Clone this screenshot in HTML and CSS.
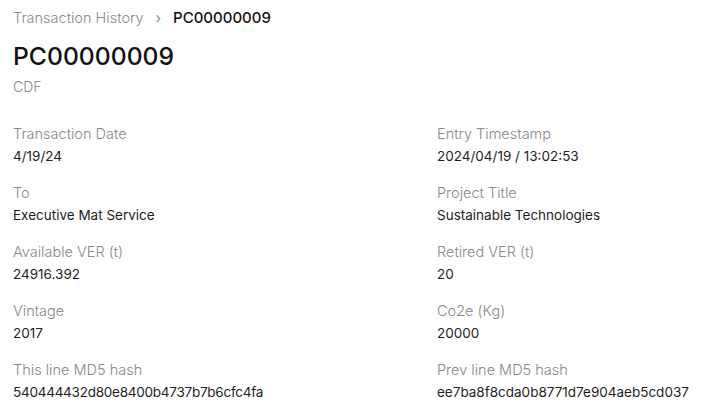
FILE: index.html
```html
<!DOCTYPE html>
<html>
<head>
<meta charset="utf-8">
<link rel="stylesheet" href="styles.css">
</head>
<body>
<div class="page">
  <nav class="crumbs">
    <span class="crumb-link">Transaction History</span>
    <span class="crumb-sep">›</span>
    <span class="crumb-current">PC00000009</span>
  </nav>
  <h1 class="title">PC00000009</h1>
  <div class="subtitle">CDF</div>
  <div class="grid">
    <div class="field"><div class="label">Transaction Date</div><div class="value">4/19/24</div></div>
    <div class="field"><div class="label">Entry Timestamp</div><div class="value">2024/04/19 / 13:02:53</div></div>
    <div class="field"><div class="label">To</div><div class="value">Executive Mat Service</div></div>
    <div class="field"><div class="label">Project Title</div><div class="value">Sustainable Technologies</div></div>
    <div class="field"><div class="label">Available VER (t)</div><div class="value">24916.392</div></div>
    <div class="field"><div class="label">Retired VER (t)</div><div class="value">20</div></div>
    <div class="field"><div class="label">Vintage</div><div class="value">2017</div></div>
    <div class="field"><div class="label">Co2e (Kg)</div><div class="value">20000</div></div>
    <div class="field"><div class="label">This line MD5 hash</div><div class="value hash">540444432d80e8400b4737b7b6cfc4fa</div></div>
    <div class="field"><div class="label">Prev line MD5 hash</div><div class="value">ee7ba8f8cda0b8771d7e904aeb5cd037</div></div>
  </div>
</div>
</body>
</html>
```

FILE: styles.css
```css
* { box-sizing: border-box; }
html, body { margin: 0; padding: 0; background: #fff; }
body { font-family: Inter, "Noto Sans", sans-serif; color: #1a1a1a; }
.page { padding: 8px 13px 0 13px; }
.crumbs { display: flex; align-items: center; gap: 12px; font-size: 14.5px; line-height: 20px; height: 20px; }
.crumb-link { color: #8a8a8a; font-weight: 300; }
.crumb-sep { color: #8a8a8a; }
.crumb-current { color: #111; font-weight: 500; font-size: 15px; }
.title { margin: 12px 0 0 0; font-size: 24.7px; line-height: 32px; font-weight: 500; color: #111; }
.subtitle { margin-top: 5px; font-size: 14px; line-height: 20px; color: #888; font-weight: 300; }
.grid { display: grid; grid-template-columns: 424px 1fr; row-gap: 17px; margin-top: 27px; }
.label { font-size: 14.5px; line-height: 20px; color: #888; font-weight: 300; }
.value { margin-top: 2px; font-size: 13.5px; line-height: 20px; color: #1e1e1e; }
.hash { letter-spacing: -0.25px; }
```
